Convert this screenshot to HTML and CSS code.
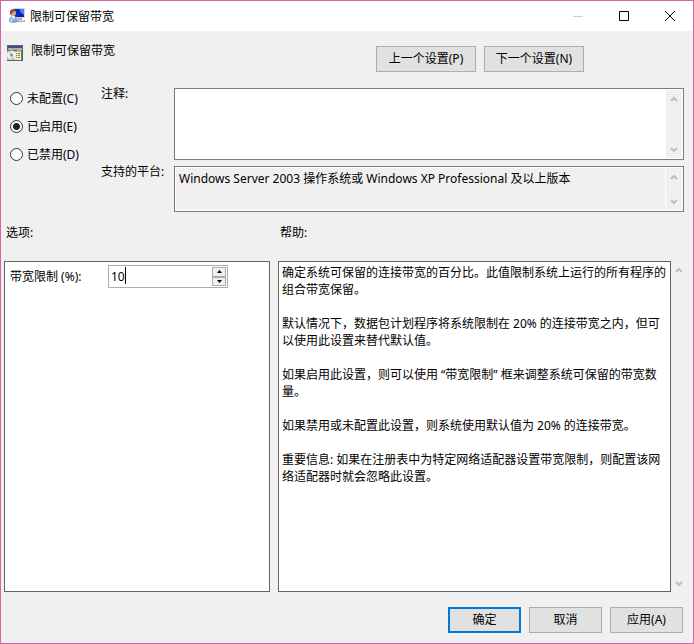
FILE: index.html
```html
<!DOCTYPE html>
<html lang="zh-CN">
<head>
<meta charset="utf-8">
<title>限制可保留带宽</title>
<link rel="stylesheet" href="styles.css">
</head>
<body>
<form class="window">
  <header class="titlebar">
    <svg class="icon" viewBox="0 0 16 16" aria-hidden="true">
      <path d="M4 0h12v10H4z" fill="#d8d8d0"/>
      <path d="M5 1h10v8H5z" fill="#0a1fa8"/>
      <path d="M10 1h5v6l-3-2z" fill="#4a80f4"/>
      <path d="M5 1h5l2 4-3 4H5z" fill="#0c2cc4"/>
      <path d="M9 10h4v2h3v2H8v-2h1z" fill="#a9adb2"/>
      <path d="M10 12h5v1h-5z" fill="#dfe2e6"/>
      <circle cx="4" cy="5" r="3" fill="#dca878"/>
      <path d="M1 6V3q1-2 3-2 2 0 3 2L4 4 2 7z" fill="#7c5c3c"/>
      <path d="M0 14v-2q1-4 4-4t5 4v2q-4 2-9 0z" fill="#78acd8"/>
      <path d="M1 12q1-3 3-3l-1 5H1z" fill="#a9d0ee"/>
      <path d="M3 8h3l-1 4z" fill="#fff"/>
    </svg>
    <span class="caption">限制可保留带宽</span>
    <button type="button" class="sys sys-min" aria-label="最小化" disabled>
      <svg viewBox="0 0 12 12" aria-hidden="true"><path d="M1 6.500h10"/></svg>
    </button>
    <button type="button" class="sys" aria-label="最大化">
      <svg viewBox="0 0 12 12" aria-hidden="true"><path d="M1.500 1.500h9v9h-9z"/></svg>
    </button>
    <button type="button" class="sys" aria-label="关闭">
      <svg viewBox="0 0 12 12" aria-hidden="true"><path d="M1 1l10 10M11 1L1 11"/></svg>
    </button>
  </header>

  <div class="policy">
    <svg class="icon" viewBox="0 0 16 16" aria-hidden="true">
      <path d="M0 0h16v16H0z" fill="#3f7078"/>
      <path d="M1 1h14v2H1z" fill="#4c4a80"/>
      <path d="M1 3h14v2H1z" fill="#a8b4b4"/>
      <path d="M1 5h14v1H1z" fill="#5a5c64"/>
      <path d="M10 5h4v1h-4z" fill="#e8b040"/>
      <path d="M0 6h14v9H0z" fill="#b4bcb8"/>
      <circle cx="4.500" cy="10" r="4.500" fill="#f0f0ee"/>
      <path d="M4.500 10L1 7q2-2 4-1.500z" fill="#c8e0c0"/>
      <path d="M4.500 10l3 3q-2 2-4 1z" fill="#d8cce4"/>
      <circle cx="4.500" cy="10" r="1.500" fill="#8a928c"/>
      <path d="M8 7h6v8H8z" fill="#f8efcc"/>
      <path d="M9 8.500h1M11 8.500h2M9 10.500h1M11 10.500h2M9 12.500h1M11 12.500h2" stroke="#8c7440"/>
      <path d="M14 6h1v9h-1z" fill="#70787c"/>
    </svg>
    <h1 class="policy-name">限制可保留带宽</h1>
    <div class="policy-nav">
      <button type="button" class="btn btn-wide">上一个设置(P)</button>
      <button type="button" class="btn btn-wide">下一个设置(N)</button>
    </div>
  </div>

  <div class="settings">
    <div class="states" role="radiogroup" aria-label="状态">
      <label class="state"><input type="radio" name="state">未配置(C)</label>
      <label class="state"><input type="radio" name="state" checked>已启用(E)</label>
      <label class="state"><input type="radio" name="state">已禁用(D)</label>
    </div>
    <div class="fields">
      <label class="field-label" for="comment">注释:</label>
      <div class="field field-comment">
        <textarea id="comment" class="text"></textarea>
        <div class="scroll">
          <button type="button" class="arrow" aria-label="向上滚动"><svg viewBox="0 0 8 6" aria-hidden="true"><path d="M1 5l3-3 3 3"/></svg></button>
          <button type="button" class="arrow" aria-label="向下滚动"><svg viewBox="0 0 8 6" aria-hidden="true"><path d="M1 1l3 3 3-3"/></svg></button>
        </div>
      </div>
      <label class="field-label" for="platform">支持的平台:</label>
      <div class="field field-platform">
        <textarea id="platform" class="text" readonly>Windows Server 2003 操作系统或 Windows XP Professional 及以上版本</textarea>
        <div class="scroll">
          <button type="button" class="arrow" aria-label="向上滚动"><svg viewBox="0 0 8 6" aria-hidden="true"><path d="M1 5l3-3 3 3"/></svg></button>
          <button type="button" class="arrow" aria-label="向下滚动"><svg viewBox="0 0 8 6" aria-hidden="true"><path d="M1 1l3 3 3-3"/></svg></button>
        </div>
      </div>
    </div>
  </div>

  <div class="panels">
    <h2 class="panel-title">选项:</h2>
    <h2 class="panel-title">帮助:</h2>
    <section class="panel options">
      <label for="limit">带宽限制 (%):</label>
      <div class="spin">
        <input id="limit" class="spin-value" type="text" inputmode="numeric" value="10">
        <span class="caret"></span>
        <div class="spin-buttons">
          <button type="button" class="step" aria-label="增加"><svg viewBox="0 0 5 3" aria-hidden="true"><path d="M0 3h5L2.500 0z"/></svg></button>
          <button type="button" class="step" aria-label="减少"><svg viewBox="0 0 5 3" aria-hidden="true"><path d="M0 0h5L2.500 3z"/></svg></button>
        </div>
      </div>
    </section>
    <div class="help-area">
      <section class="panel help">
        <p>确定系统可保留的连接带宽的百分比。此值限制系统上运行的所有程序的组合带宽保留。</p>
        <p>默认情况下，数据包计划程序将系统限制在 20% 的连接带宽之内，但可以使用此设置来替代默认值。</p>
        <p>如果启用此设置，则可以使用 “带宽限制” 框来调整系统可保留的带宽数量。</p>
        <p>如果禁用或未配置此设置，则系统使用默认值为 20% 的连接带宽。</p>
        <p>重要信息: 如果在注册表中为特定网络适配器设置带宽限制，则配置该网络适配器时就会忽略此设置。</p>
      </section>
      <div class="scroll">
        <button type="button" class="arrow" aria-label="向上滚动"><svg viewBox="0 0 8 6" aria-hidden="true"><path d="M1 5l3-3 3 3"/></svg></button>
        <button type="button" class="arrow" aria-label="向下滚动"><svg viewBox="0 0 8 6" aria-hidden="true"><path d="M1 1l3 3 3-3"/></svg></button>
      </div>
    </div>
  </div>

  <footer class="actions">
    <button type="submit" class="btn btn-default">确定</button>
    <button type="button" class="btn">取消</button>
    <button type="button" class="btn">应用(A)</button>
  </footer>
</form>
</body>
</html>
```
FILE: styles.css
```css
* {
  box-sizing: border-box;
}

body {
  margin: 0;
  color: #000;
  font: 12px/17px "Noto Sans", "Noto Sans CJK SC", sans-serif;
}

button,
input,
textarea {
  margin: 0;
  color: inherit;
  font: inherit;
}

h1,
h2,
p {
  margin: 0;
  font-size: 12px;
  font-weight: 400;
}

.window {
  display: flex;
  flex-direction: column;
  min-height: 100vh;
  border: 1px solid #d864a0;
  background: #f0f0f0;
}

.icon {
  flex: none;
  width: 16px;
  height: 16px;
}

/* Title bar */
.titlebar {
  display: flex;
  align-items: center;
  height: 30px;
  padding-left: 8px;
  background: #fff;
}

.caption {
  flex: 1;
  padding-left: 5px;
}

.sys {
  display: grid;
  place-items: center;
  width: 46px;
  height: 30px;
  padding: 0;
  border: 0;
  background: none;
}

.sys svg {
  width: 12px;
  height: 12px;
  fill: none;
  stroke: #000;
}

.sys-min svg {
  stroke: #ccc;
}

/* Policy heading */
.policy {
  display: flex;
  align-items: flex-start;
  padding: 11px 109px 0 6px;
}

.policy .icon {
  margin-top: 3px;
}

.policy-name {
  flex: 1;
  padding-left: 8px;
}

.policy-nav {
  display: flex;
  gap: 8px;
  margin-top: 4px;
}

.btn {
  width: 73px;
  height: 26px;
  padding: 0 0 2px;
  border: 1px solid #adadad;
  background: #e1e1e1;
}

.btn-wide {
  width: 100px;
}

.btn-default {
  border: 2px solid #0078d7;
}

/* State and text fields */
.settings {
  display: flex;
  padding: 16px 9px 0;
}

.states {
  display: flex;
  flex-direction: column;
  gap: 11px;
  width: 91px;
  padding-top: 2px;
}

.state {
  display: flex;
  align-items: center;
  gap: 4px;
}

.state input {
  appearance: none;
  width: 13px;
  height: 13px;
  border: 1px solid #333;
  border-radius: 50%;
  background: #fff;
}

.state input:checked {
  background: radial-gradient(circle, #222 3px, #fff 4px);
}

.fields {
  display: grid;
  flex: 1;
  grid-template-columns: 73px 1fr;
  gap: 6px 0;
}

.field-label {
  margin-top: -3px;
}

.field {
  display: flex;
  padding: 1px;
  border: 1px solid #7a7a7a;
  background: #fff;
}

.field-comment {
  height: 72px;
}

.field-platform {
  height: 46px;
}

.text {
  flex: 1;
  padding: 2px 3px;
  border: 0;
  outline: 0;
  resize: none;
  overflow: hidden;
  background: #fff;
}

.field-platform .text {
  margin-right: 1px;
  background: #f0f0f0;
}

.scroll {
  display: flex;
  flex-direction: column;
  justify-content: space-between;
  width: 16px;
  background: #f0f0f0;
}

.arrow {
  display: grid;
  place-items: center;
  height: 17px;
  padding: 0;
  border: 0;
  background: none;
}

.arrow svg {
  width: 8px;
  height: 6px;
  fill: none;
  stroke: #bfbfbf;
  stroke-width: 2;
}

/* Options and help */
.panels {
  display: grid;
  flex: 1;
  grid-template-columns: 65fr 100fr;
  grid-template-rows: auto 1fr;
  gap: 20px 8px;
  padding: 12px 6px 0 3px;
}

.panel-title {
  padding-left: 2px;
}

.panel {
  border: 1px solid #646464;
  background: #fff;
}

.options {
  display: flex;
  align-items: flex-start;
  padding: 3px 5px;
}

.options label {
  width: 98px;
  line-height: 23px;
}

.spin {
  position: relative;
  display: flex;
  width: 120px;
  height: 23px;
  padding: 1px;
  border: 1px solid #abadb3;
}

.spin-value {
  flex: 1;
  min-width: 0;
  padding: 0 1px;
  border: 0;
  outline: 0;
}

.caret {
  position: absolute;
  top: 1px;
  left: 16px;
  width: 1px;
  height: 17px;
  background: #000;
}

.spin-buttons {
  display: flex;
  flex-direction: column;
  width: 14px;
}

.step {
  display: grid;
  flex: 1;
  place-items: center;
  padding: 0;
  border: 1px solid #acacac;
  background: #f0f0f0;
}

.step svg {
  width: 5px;
  height: 3px;
}

.help-area {
  display: flex;
}

.help {
  display: flex;
  flex: 1;
  flex-direction: column;
  gap: 17px;
  padding: 2px 3px;
}

/* Dialog actions */
.actions {
  display: flex;
  justify-content: flex-end;
  gap: 8px;
  padding: 15px 10px 10px;
}
```
